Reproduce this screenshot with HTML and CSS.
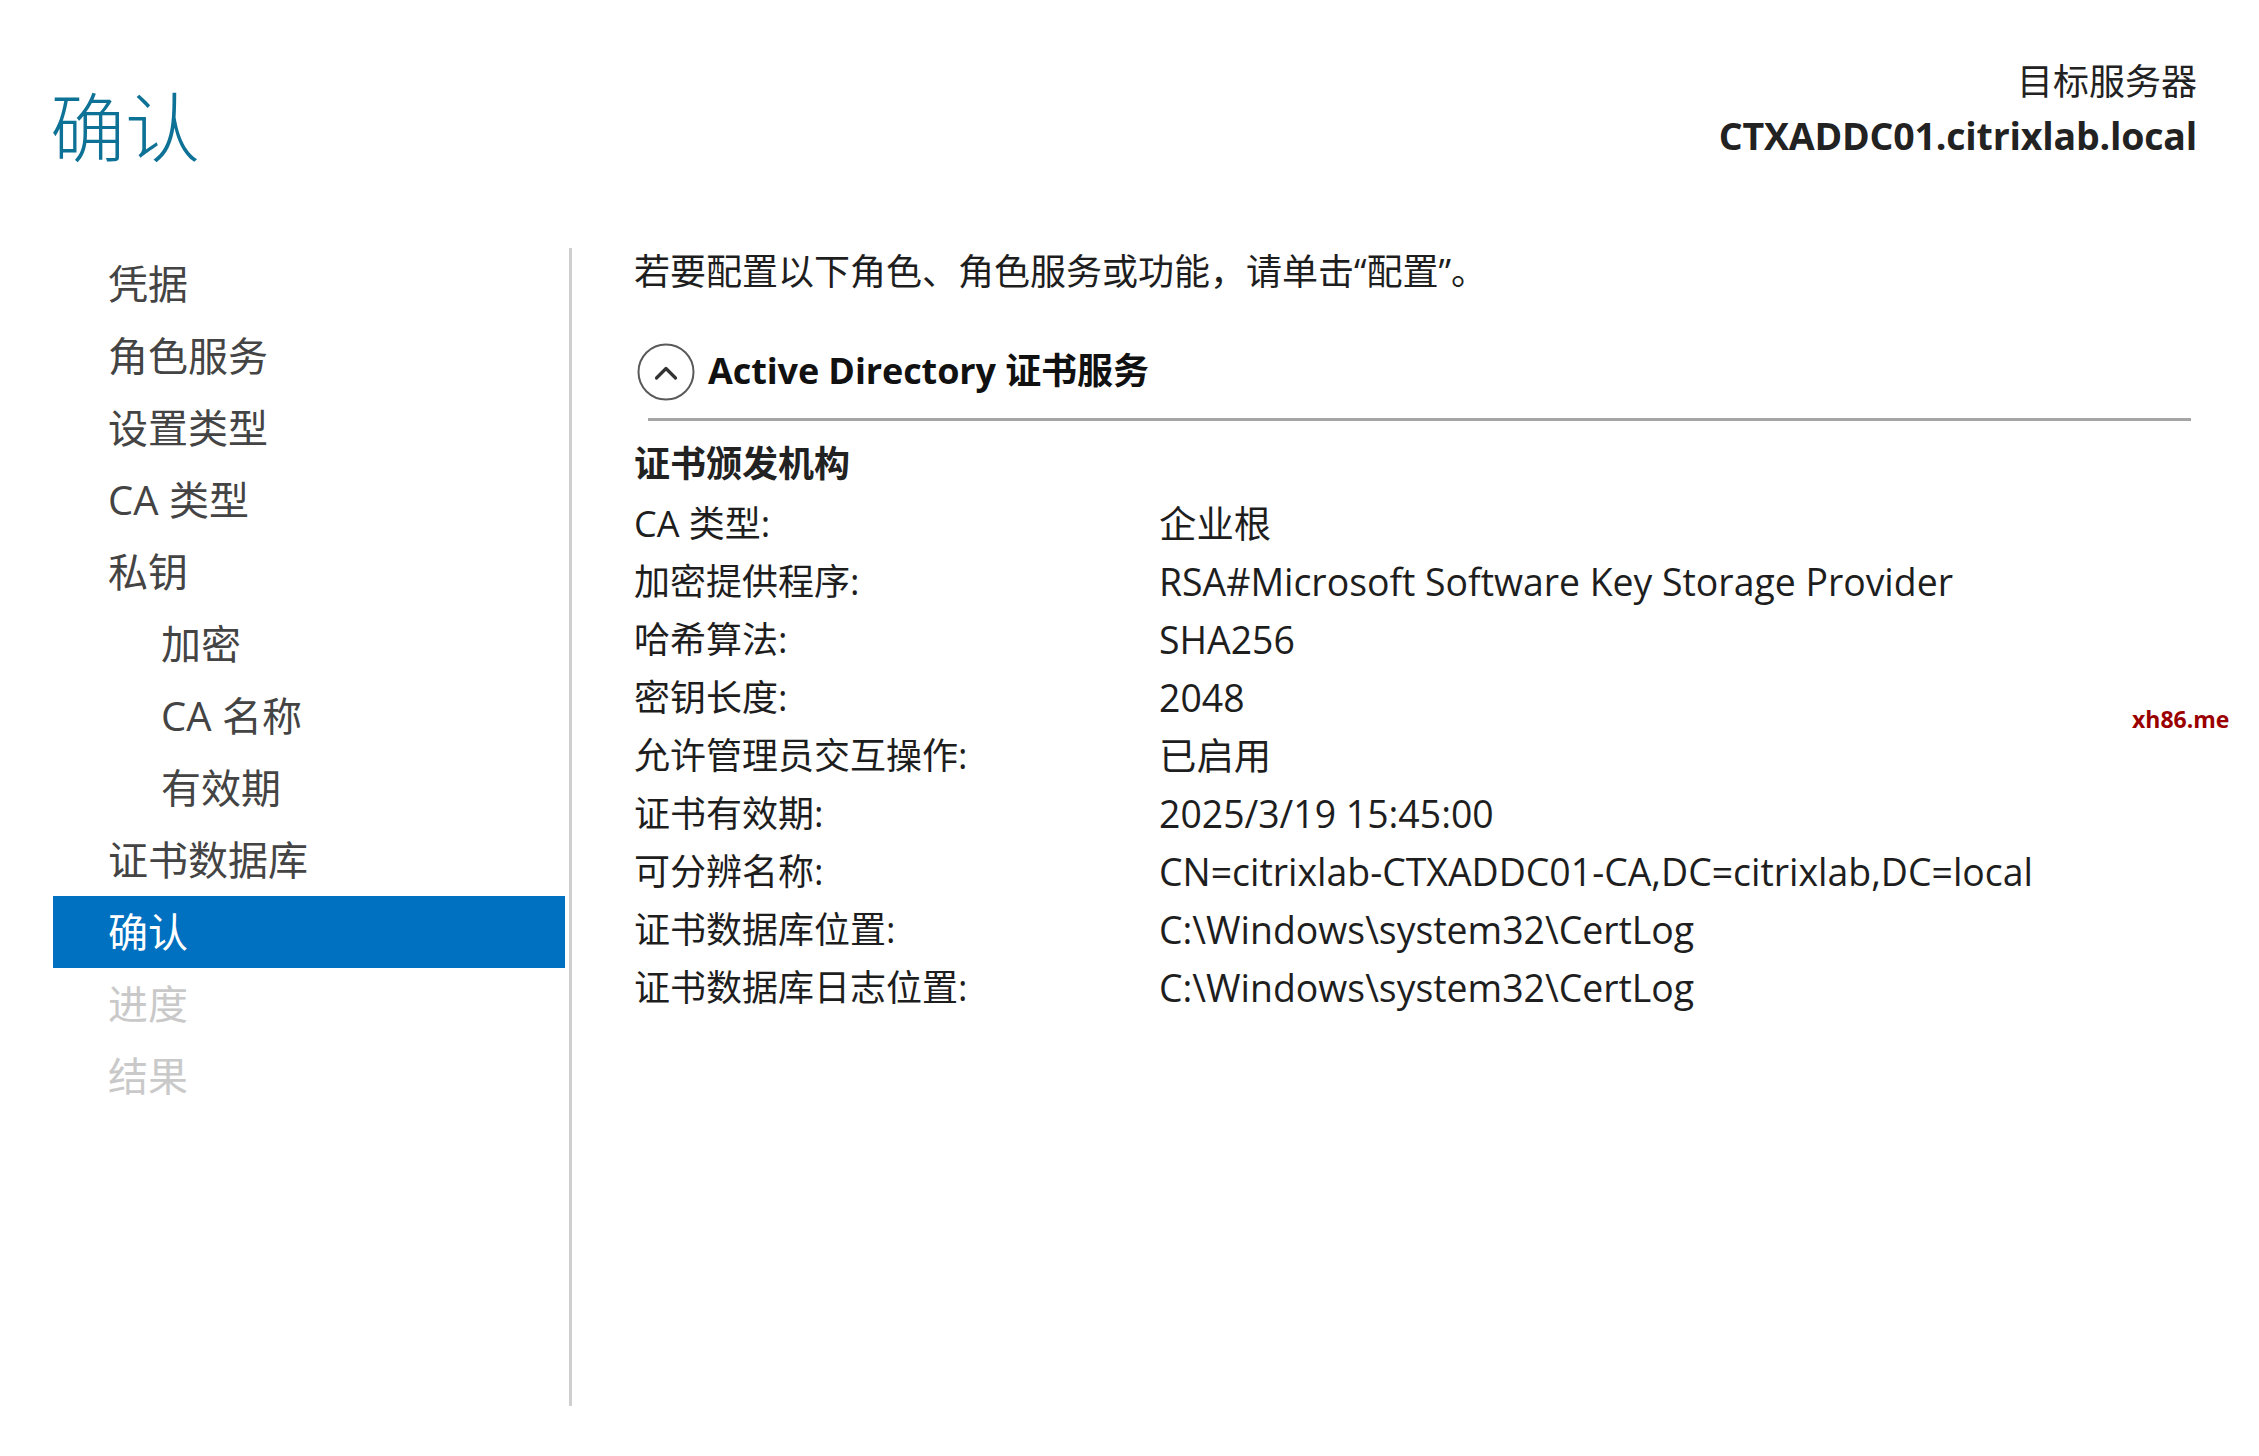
FILE: index.html
```html
<!DOCTYPE html>
<html lang="zh-CN">
<head>
<meta charset="utf-8">
<title>确认</title>
<link rel="stylesheet" href="styles.css">
</head>
<body>
<div class="page">
  <header class="header">
    <h1 class="title">确认</h1>
    <div class="target">
      <div class="target-label">目标服务器</div>
      <div class="target-name">CTXADDC01.citrixlab.local</div>
    </div>
  </header>
  <div class="main">
    <nav class="nav">
      <ul class="nav-list">
        <li class="nav-item">凭据</li>
        <li class="nav-item">角色服务</li>
        <li class="nav-item">设置类型</li>
        <li class="nav-item">CA 类型</li>
        <li class="nav-item">私钥</li>
        <li class="nav-item sub">加密</li>
        <li class="nav-item sub">CA 名称</li>
        <li class="nav-item sub">有效期</li>
        <li class="nav-item">证书数据库</li>
        <li class="nav-item active">确认</li>
        <li class="nav-item disabled">进度</li>
        <li class="nav-item disabled">结果</li>
      </ul>
      <div class="divider"></div>
    </nav>
    <section class="content">
      <p class="intro">若要配置以下角色、角色服务或功能，请单击“配置”。</p>
      <div class="section-head">
        <svg class="collapse-icon" viewBox="0 0 58 58" width="58" height="58" aria-hidden="true">
          <circle cx="29" cy="29" r="27.5" fill="none" stroke="#5a5a5a" stroke-width="2"/>
          <path d="M19.5 35 L29 25.5 L38.5 35" fill="none" stroke="#333" stroke-width="3.2" stroke-linecap="round" stroke-linejoin="round"/>
        </svg>
        <span class="section-title">Active Directory 证书服务</span>
      </div>
      <div class="rule"></div>
      <div class="group-title">证书颁发机构</div>
      <div class="rows">
        <div class="row"><span class="label">CA 类型:</span><span class="value">企业根</span></div>
        <div class="row"><span class="label">加密提供程序:</span><span class="value">RSA#Microsoft Software Key Storage Provider</span></div>
        <div class="row"><span class="label">哈希算法:</span><span class="value">SHA256</span></div>
        <div class="row"><span class="label">密钥长度:</span><span class="value">2048</span></div>
        <div class="row"><span class="label">允许管理员交互操作:</span><span class="value">已启用</span></div>
        <div class="row"><span class="label">证书有效期:</span><span class="value">2025/3/19 15:45:00</span></div>
        <div class="row"><span class="label">可分辨名称:</span><span class="value">CN=citrixlab-CTXADDC01-CA,DC=citrixlab,DC=local</span></div>
        <div class="row"><span class="label">证书数据库位置:</span><span class="value">C:\Windows\system32\CertLog</span></div>
        <div class="row"><span class="label">证书数据库日志位置:</span><span class="value">C:\Windows\system32\CertLog</span></div>
      </div>
    </section>
  </div>
  <div class="watermark">xh86.me</div>
</div>
</body>
</html>
```

FILE: styles.css
```css
html, body {
  margin: 0;
  padding: 0;
  background: #ffffff;
}

body {
  font-family: "Open Sans", "Noto Sans CJK SC", sans-serif;
  color: #1e1e1e;
  overflow: hidden;
}

.page {
  position: relative;
  width: 2259px;
  height: 1456px;
}

.header {
  display: flex;
  justify-content: space-between;
  align-items: flex-start;
  height: 248px;
  padding: 0 62px 0 50px;
  box-sizing: border-box;
}

.title {
  margin: 74px 0 0 0;
  font-family: "Noto Sans CJK SC", sans-serif;
  font-weight: 300;
  font-size: 75px;
  line-height: 100px;
  color: #0e7196;
}

.target {
  margin-top: 54px;
  text-align: right;
}

.target-label {
  font-family: "Noto Sans CJK SC", sans-serif;
  font-size: 36px;
  line-height: 50px;
  color: #222;
}

.target-name {
  margin-top: 4px;
  font-family: "Open Sans", sans-serif;
  font-weight: 700;
  font-size: 37.5px;
  line-height: 56px;
  color: #222;
  letter-spacing: -0.2px;
}

.main {
  display: flex;
  align-items: flex-start;
}

.nav {
  display: flex;
  margin-left: 53px;
}

.nav-list {
  list-style: none;
  margin: 0;
  padding: 0;
  width: 512px;
}

.nav-item {
  height: 72px;
  line-height: 72px;
  padding-left: 55px;
  font-family: "Open Sans", "Noto Sans CJK SC", sans-serif;
  font-size: 40px;
  color: #444;
}

.nav-item.sub {
  padding-left: 108px;
}

.nav-item.active {
  background: #0070c0;
  color: #ffffff;
}

.nav-item.disabled {
  color: #c9c9c9;
}

.divider {
  width: 3px;
  height: 1158px;
  margin-left: 4px;
  background: #cfcfcf;
}

.content {
  padding-left: 62px;
  flex: 1;
}

.intro {
  margin: 0;
  font-size: 36px;
  line-height: 48px;
  color: #1e1e1e;
}

.section-head {
  display: flex;
  align-items: center;
  gap: 13px;
  height: 58px;
  margin-top: 47px;
  padding-left: 3px;
}

.collapse-icon {
  flex: none;
}

.section-title {
  padding-bottom: 2px;
  font-weight: 700;
  font-size: 36px;
  line-height: 50px;
  color: #111;
  letter-spacing: -0.1px;
}

.rule {
  height: 3px;
  width: 1543px;
  margin: 17px 0 0 14px;
  background: #a5a5a5;
}

.group-title {
  margin-top: 14px;
  font-weight: 700;
  font-size: 36px;
  line-height: 58px;
  color: #222;
}

.rows {
  margin-top: 2px;
}

.row {
  display: flex;
  height: 58px;
  line-height: 58px;
  font-size: 36px;
}

.label {
  width: 525px;
  flex: none;
  color: #1e1e1e;
}

.value {
  font-size: 37.4px;
  color: #1e1e1e;
}

.watermark {
  position: absolute;
  left: 2132px;
  top: 704px;
  font-family: "Open Sans", sans-serif;
  font-weight: 700;
  font-size: 23px;
  line-height: 30px;
  color: #9b0000;
}
```
